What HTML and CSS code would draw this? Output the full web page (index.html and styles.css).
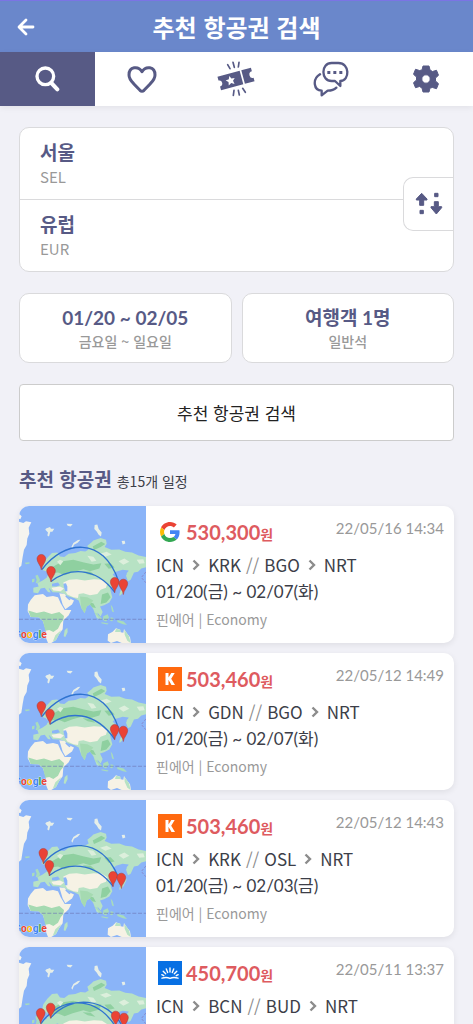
FILE: index.html
```html
<!DOCTYPE html>
<html lang="ko">

<head>
  <meta charset="utf-8">
  <meta name="viewport" content="width=device-width, initial-scale=1">
  <title>추천 항공권 검색</title>
  <link rel="stylesheet" href="styles.css">
</head>

<body>
  <!-- Shared drawings -->
  <svg class="defs" aria-hidden="true">
    <symbol id="map" viewBox="27 17 381 410" preserveAspectRatio="none">
      <rect x="27" y="17" width="381" height="410" fill="#8ab4f8" />
      <!-- Greenland and arctic islands -->
      <path fill="#f5f4ef" d="M27 64L40 68L48 63L64 66L56 82L58 100L52 114L50 134L42 148L38 170L34 196L27 202z M27 40L35 48L31 57L27 55z" />
      <path fill="#e6eee8" d="M108 84L120 80L123 85L133 85L127 94L121 94L117 108L112 105L114 96L106 88z M170 70L188 71L182 78L173 76z M254 74L262 72L266 86L275 96L273 108L266 103L260 93L253 86z M335 122L344 121L346 129L338 132z M184 140L190 128L204 119L211 118L203 127L192 133L187 145z" />
      <path fill="#a8dcbc" d="M44 187L58 185L59 189L48 191z M76 226L83 223L90 238L88 246L77 248L80 238z M66 236L74 234L73 244L66 246z" />
      <!-- Eurasia -->
      <path fill="#b7e2c4" d="M95 208L100 188L112 172L126 158L142 156L150 168L163 170L176 160L196 158L212 152L226 153L236 147L232 136L244 126L250 120L272 113L288 118L290 130L284 140L304 148L328 147L346 154L366 156L386 165L408 170V200L394 204L384 214L372 216L362 238L354 242L348 226L356 210L338 208L318 214L308 222L320 236L312 256L300 262L303 276L307 290L298 306L282 314L270 318L278 334L272 348L262 336L268 356L260 352L250 326L240 312L230 318L224 338L214 322L206 300L192 292L176 288L166 282L150 276L128 275L122 268L116 262L122 276L114 274L104 262L92 264L84 278L70 276L70 262L86 258L82 248L98 240L110 232L114 222L108 212z" />
      <path fill="#8fd0a0" d="M126 200L158 182L190 178L222 186L250 192L274 188L268 204L240 212L220 206L188 215L164 224L144 216L126 218z M248 138L274 124L286 131L272 140L252 149z M283 190L302 188L314 201L296 205z M218 212L242 214L256 226L233 221z M276 282L294 276L302 290L289 306L272 310z M236 306L250 308L258 322L246 320z" />
      <path fill="#dcefdc" d="M232 166L250 169L259 181L245 184z M270 160L290 154L305 162L286 169z M326 182L343 174L358 184L340 193z M380 178L400 176L404 188L388 190z M150 178L160 182L151 194L141 184z" />
      <!-- Steppe, deserts, Arabia -->
      <path fill="#f6f2e5" d="M160 246L178 238L200 236L224 240L252 236L276 238L292 248L288 262L272 268L262 280L240 284L220 278L206 280L204 292L190 290L172 282L164 268z M148 278L164 280L176 292L192 300L186 312L166 326L158 312z M124 262L150 258L162 264L152 272L130 270z" />
      <path fill="#8ab4f8" d="M160 250L168 248L172 258L172 272L165 272L162 260z M126 250L144 246L150 254L138 258L126 257z M168 284L182 296L178 299L166 288z M112 214L122 206L126 212L120 224L112 226z" />
      <path fill="#a5dab1" d="M210 288L232 290L250 300L240 312L230 318L224 338L214 322z" />
      <!-- Africa -->
      <path fill="#f6f2e5" d="M62 298L74 284L99 280L110 289L129 286L144 290L152 308L164 328L184 328L176 344L160 360L158 386L146 402L138 418L124 427H114L108 412L107 386L99 362L86 350L62 349L53 332L54 312z" />
      <path fill="#a5dab1" d="M55 330L80 337L102 333L125 340L148 334L162 346L160 358L152 368L144 384L130 394L118 388L106 390L99 362L86 350L62 349z" />
      <path fill="#b7e2c4" d="M136 404L154 388L146 404L138 418L128 424z M164 389L172 381L173 394L166 409L161 407z M335 262L345 249L350 256L340 276L329 286L328 281z M350 218L355 213L357 232L353 236z" />
      <!-- South-east Asia and Australia -->
      <path fill="#a8dcbc" d="M252 335L260 338L277 355L272 358z M280 347L293 341L297 351L288 363L279 358z M275 365L296 369L292 372L274 368z M302 350L311 352L307 362L301 361z M322 358L341 363L351 373L339 371L322 364z M302 312L308 320L312 335L306 333z" />
      <path fill="#f6f2e5" d="M294 401L308 393L318 383L330 387L332 395L340 396L342 385L350 397L360 410L363 427H335L321 421L303 427L293 420z" />
      <path fill="#b7e2c4" d="M318 384L332 387L331 394L315 394z M343 387L357 407L362 427L352 420L344 402z" />
      <path d="M27 356H408" fill="none" stroke="#6f78b8" stroke-width="2" stroke-dasharray="12 5" />
      <path d="M408 214l-14 17 14 16" fill="none" stroke="#8878bb" stroke-width="2" stroke-dasharray="8 4" />
      <text class="map-brand" x="12" y="411"><tspan fill="#4285f4">G</tspan><tspan fill="#ea4335">o</tspan><tspan fill="#fbbc05">o</tspan><tspan fill="#4285f4">g</tspan><tspan fill="#34a853">l</tspan><tspan fill="#ea4335">e</tspan></text>
    </symbol>
    <symbol id="pin" viewBox="0 0 28 48" overflow="visible">
      <path d="M14 47C13 34 1 26 1 14a13 13 0 0 1 26 0C27 26 15 34 14 47z" fill="#ea4335" stroke="#a63a3a" stroke-width="1.5" />
    </symbol>
    <symbol id="chevron" viewBox="0 0 8 12">
      <path d="M1.500 1.500L6 6L1.500 10.500" fill="none" stroke="#8c8c8c" stroke-width="2.400" />
    </symbol>
    <symbol id="kayak" viewBox="0 0 24 24">
      <rect width="24" height="24" fill="#ff690f" />
      <path d="M7.500 6h3v4.600L13.300 6h3.400l-3.500 5.700L17 18h-3.500l-3-5.200V18h-3z" fill="#fff" />
    </symbol>
    <symbol id="google" viewBox="0 0 48 48">
      <path fill="#ea4335" d="M24 9.500c3.540 0 6.710 1.220 9.210 3.600l6.850-6.850C35.900 2.380 30.470 0 24 0 14.620 0 6.510 5.380 2.560 13.220l7.980 6.190C12.430 13.720 17.740 9.500 24 9.500z" />
      <path fill="#4285f4" d="M46.980 24.550c0-1.570-.15-3.090-.38-4.550H24v9.020h12.940c-.58 2.960-2.260 5.480-4.780 7.180l7.730 6c4.510-4.180 7.090-10.360 7.090-17.650z" />
      <path fill="#fbbc05" d="M10.530 28.590c-.48-1.450-.76-2.990-.76-4.590s.27-3.140.76-4.590l-7.980-6.190C.92 16.460 0 20.120 0 24c0 3.880.92 7.540 2.560 10.780l7.970-6.190z" />
      <path fill="#34a853" d="M24 48c6.480 0 11.930-2.130 15.890-5.810l-7.730-6c-2.150 1.450-4.920 2.300-8.160 2.300-6.260 0-11.570-4.220-13.470-9.910l-7.980 6.190C6.510 42.620 14.620 48 24 48z" />
    </symbol>
    <symbol id="sunrise" viewBox="0 0 24 24">
      <rect width="24" height="24" fill="#0770e3" />
      <g fill="none" stroke="#fff" stroke-width="1.400" stroke-linecap="round">
        <path d="M12 7v4M8.300 8l1.400 3.500M15.700 8l-1.400 3.500M5.200 10.300l2.500 2.500M18.800 10.300l-2.500 2.500M3.800 13.700l2 1M20.200 13.700l-2 1" />
        <path d="M4 17.200c3.500-1.200 5.500-1 8 .2 2.500-1.200 4.500-1.400 8-.2" />
      </g>
    </symbol>
  </svg>

  <header class="header">
    <button class="back" type="button" aria-label="뒤로">
      <svg width="18" height="18" viewBox="0 0 18 18">
        <path d="M9 2L2 9l7 7M2.500 9H16" fill="none" stroke="#fff" stroke-width="2.800" stroke-linecap="round" stroke-linejoin="round" />
      </svg>
    </button>
    <h1>추천 항공권 검색</h1>
  </header>

  <nav class="tabs">
    <a class="tab active" href="#search" aria-label="검색">
      <svg width="26" height="28" viewBox="0 0 78 84">
        <circle cx="34" cy="34" r="25" fill="none" stroke="currentColor" stroke-width="10" />
        <path d="M52 54L70 73" stroke="currentColor" stroke-width="12" stroke-linecap="round" />
      </svg>
    </a>
    <a class="tab" href="#likes" aria-label="찜">
      <svg width="30" height="28" viewBox="0 0 90 84">
        <path d="M45 20C34 2 6 4 6 30c0 12 7 19 14 26l19 20q6 6 12 0l19-20c7-7 14-14 14-26C84 4 56 2 45 20z" fill="none" stroke="currentColor" stroke-width="9" stroke-linejoin="round" />
      </svg>
    </a>
    <a class="tab" href="#tickets" aria-label="티켓">
      <svg width="38" height="36" viewBox="0 0 114 108">
        <g transform="rotate(-15 57 54)">
          <path d="M5 33H74v42H5V63a9 9 0 0 0 0-18z M79 33h30v11a10 10 0 0 0 0 20v11H79z" fill="currentColor" />
          <path d="M40 40l4 9 10 1-7 7 2 10-9-5-9 5 2-10-7-7 10-1z" fill="#fff" />
        </g>
        <path d="M32 11l7 12M48 4l4 15M66 4l-2 14M51 88l-2 15M64 88l3 14M77 82l8 12" stroke="currentColor" stroke-width="5" stroke-linecap="round" />
      </svg>
    </a>
    <a class="tab" href="#chat" aria-label="채팅">
      <svg width="36" height="36" viewBox="0 0 108 108">
        <g fill="none" stroke="currentColor" stroke-width="7" stroke-linecap="round" stroke-linejoin="round">
          <path d="M56 6h20c35 0 35 53 6 54v15L66 60H56C23 60 23 6 56 6z" />
          <path d="M21 40C-3 55 2 88 26 89v14l18-14c12 0 20-3 26-9" />
        </g>
        <path d="M43 30h9v9h-9z M61 30h9v9h-9z M79 30h9v9h-9z" fill="currentColor" />
      </svg>
    </a>
    <a class="tab" href="#settings" aria-label="설정">
      <svg width="26" height="28" viewBox="0 0 26 28">
        <path fill="currentColor" fill-rule="evenodd" d="M10 1h6l1 4 2.500 1.500 4-1.200 2 5-3 2.700v3l3 2.700-2 5-4-1.200L17 23l-1 4h-6l-1-4-2.500-1.500-4 1.200-2-5 3-2.700v-3l-3-2.700 2-5 4 1.200L9 5z M13 9.800a4.200 4.200 0 1 0 0 8.400 4.200 4.200 0 0 0 0-8.400z" stroke="currentColor" stroke-width="1" stroke-linejoin="round" />
      </svg>
    </a>
  </nav>

  <main class="page">
    <!-- Search form -->
    <form class="search">
      <div class="places">
        <button class="place" type="button"><strong>서울</strong><span>SEL</span></button>
        <button class="place" type="button"><strong>유럽</strong><span>EUR</span></button>
        <button class="swap" type="button" aria-label="출발지와 도착지 바꾸기">
          <svg width="28" height="24" viewBox="0 0 84 72">
            <g fill="currentColor" stroke="currentColor" stroke-width="3" stroke-linejoin="round">
              <path d="M20 4L36 21v3H26v16H14V24H4v-3z M15 55h10v10H15z M59 4h10v10H59z M58 29h12v15h10v3L64 66 48 47v-3h10z" />
            </g>
          </svg>
        </button>
      </div>
      <div class="options">
        <button class="option" type="button"><strong>01/20 ~ 02/05</strong><span>금요일 ~ 일요일</span></button>
        <button class="option" type="button"><strong>여행객 1명</strong><span>일반석</span></button>
      </div>
      <button class="submit" type="button">추천 항공권 검색</button>
    </form>

    <!-- Results -->
    <div class="list-title">
      <h2>추천 항공권</h2>
      <span>총15개 일정</span>
    </div>

    <ul class="list">
      <li class="card">
        <svg class="card-map" viewBox="27 17 381 410" preserveAspectRatio="none">
          <use href="#map" x="27" y="17" width="381" height="410" />
          <path class="arc" d="M96 207C160 120 280 105 326 243M123 243C175 203 255 195 314 275" />
          <use href="#pin" x="80" y="161" width="28" height="48" />
          <use href="#pin" x="109" y="197" width="28" height="48" />
          <use href="#pin" x="300" y="230" width="28" height="48" />
          <use href="#pin" x="326" y="235" width="28" height="48" />
        </svg>
        <div class="info">
          <div class="top">
            <svg class="logo small"><use href="#google" /></svg>
            <strong class="price">530,300<small>원</small></strong>
            <time class="stamp">22/05/16 14:34</time>
          </div>
          <div class="route">ICN<svg><use href="#chevron" /></svg>KRK<i>//</i>BGO<svg><use href="#chevron" /></svg>NRT</div>
          <div class="dates">01/20(금) ~ 02/07(화)</div>
          <div class="airline">핀에어 | Economy</div>
        </div>
      </li>

      <li class="card">
        <svg class="card-map" viewBox="27 17 381 410" preserveAspectRatio="none">
          <use href="#map" x="27" y="17" width="381" height="410" />
          <path class="arc" d="M96 207C160 120 280 105 326 243M120 230C175 190 255 190 314 275" />
          <use href="#pin" x="80" y="161" width="28" height="48" />
          <use href="#pin" x="106" y="184" width="28" height="48" />
          <use href="#pin" x="300" y="230" width="28" height="48" />
          <use href="#pin" x="326" y="235" width="28" height="48" />
        </svg>
        <div class="info">
          <div class="top">
            <svg class="logo"><use href="#kayak" /></svg>
            <strong class="price">503,460<small>원</small></strong>
            <time class="stamp">22/05/12 14:49</time>
          </div>
          <div class="route">ICN<svg><use href="#chevron" /></svg>GDN<i>//</i>BGO<svg><use href="#chevron" /></svg>NRT</div>
          <div class="dates">01/20(금) ~ 02/07(화)</div>
          <div class="airline">핀에어 | Economy</div>
        </div>
      </li>

      <li class="card">
        <svg class="card-map" viewBox="27 17 381 410" preserveAspectRatio="none">
          <use href="#map" x="27" y="17" width="381" height="410" />
          <path class="arc" d="M100 207C160 135 270 125 323 243M118 243C170 203 250 200 309 275" />
          <use href="#pin" x="86" y="161" width="28" height="48" />
          <use href="#pin" x="104" y="197" width="28" height="48" />
          <use href="#pin" x="295" y="230" width="28" height="48" />
          <use href="#pin" x="320" y="235" width="28" height="48" />
        </svg>
        <div class="info">
          <div class="top">
            <svg class="logo"><use href="#kayak" /></svg>
            <strong class="price">503,460<small>원</small></strong>
            <time class="stamp">22/05/12 14:43</time>
          </div>
          <div class="route">ICN<svg><use href="#chevron" /></svg>KRK<i>//</i>OSL<svg><use href="#chevron" /></svg>NRT</div>
          <div class="dates">01/20(금) ~ 02/03(금)</div>
          <div class="airline">핀에어 | Economy</div>
        </div>
      </li>

      <li class="card">
        <svg class="card-map" viewBox="27 17 381 410" preserveAspectRatio="none">
          <use href="#map" x="27" y="17" width="381" height="410" />
          <path class="arc" d="M93 246C150 165 255 160 316 254M122 229C180 160 290 165 340 258" />
          <use href="#pin" x="78" y="200" width="28" height="48" />
          <use href="#pin" x="108" y="184" width="28" height="48" />
          <use href="#pin" x="303" y="208" width="28" height="48" />
          <use href="#pin" x="328" y="214" width="28" height="48" />
        </svg>
        <div class="info">
          <div class="top">
            <svg class="logo"><use href="#sunrise" /></svg>
            <strong class="price">450,700<small>원</small></strong>
            <time class="stamp">22/05/11 13:37</time>
          </div>
          <div class="route">ICN<svg><use href="#chevron" /></svg>BCN<i>//</i>BUD<svg><use href="#chevron" /></svg>NRT</div>
        </div>
      </li>
    </ul>
  </main>
</body>

</html>
```
FILE: styles.css
```css
* {
  box-sizing: border-box;
}

body {
  margin: 0;
  background-color: #f1f1f7;
  color: #3c3e48;
  font-family: "Noto Sans CJK KR", sans-serif;
}

button {
  margin: 0;
  padding: 0;
  border: none;
  background: none;
  color: inherit;
  font-family: inherit;
  cursor: pointer;
}

svg {
  display: block;
}

.defs {
  display: none;
}

/* Header */
.header {
  display: grid;
  grid-template-columns: 52px 1fr 52px;
  align-items: center;
  height: 52px;
  border-top: 1px solid #7b74e4;
  background-color: #6a87cb;
  color: #fff;
}

.header h1 {
  margin: 0;
  font-size: 24px;
  line-height: 48px;
  text-align: center;
}

.back {
  display: flex;
  justify-content: center;
}

/* Tabs */
.tabs {
  display: grid;
  grid-template-columns: repeat(5, 1fr);
  height: 54px;
  background-color: #fff;
  box-shadow: 0 2px 6px rgba(0, 0, 0, 0.06);
}

.tab {
  display: flex;
  align-items: center;
  justify-content: center;
  color: #575a85;
}

.tab.active {
  background-color: #575a85;
  color: #fff;
}

.page {
  padding: 21px 19px;
}

/* Search form */
.search {
  display: flex;
  flex-direction: column;
  gap: 21px;
}

.places,
.option {
  border: 1px solid #dadadc;
  border-radius: 10px;
  background-color: #fff;
}

.places {
  position: relative;
}

.place {
  display: flex;
  flex-direction: column;
  justify-content: center;
  width: 100%;
  height: 71px;
  padding: 0 20px;
  text-align: left;
}

.place + .place {
  height: 72px;
  border-top: 1px solid #dadadc;
}

.place strong,
.option strong {
  color: #575a85;
  font-size: 20px;
  line-height: 26px;
}

.place strong {
  font-size: 19px;
}

.place span {
  color: #999;
  font-size: 15px;
  line-height: 24px;
}

/* sits over the line between the two places */
.swap {
  position: absolute;
  top: 49px;
  right: 0;
  display: flex;
  align-items: center;
  justify-content: center;
  width: 50px;
  height: 54px;
  border: 1px solid #dadadc;
  border-right: none;
  border-radius: 10px 0 0 10px;
  background-color: #fff;
  color: #575a85;
}

.options {
  display: grid;
  grid-template-columns: 1fr 1fr;
  gap: 10px;
}

.option {
  display: flex;
  flex-direction: column;
  align-items: center;
  justify-content: center;
  height: 70px;
}

.option strong {
  font-family: Lato, "Noto Sans CJK KR", sans-serif;
  font-size: 19px;
}

.option span {
  color: #999;
  font-size: 14px;
  font-weight: 500;
  line-height: 20px;
}

.submit {
  height: 57px;
  border: 1px solid #ccc;
  border-radius: 4px;
  background-color: #fff;
  color: #222;
  font-size: 17px;
}

/* Results */
.list-title {
  display: flex;
  align-items: baseline;
  gap: 5px;
  margin: 24px 0 11px;
  line-height: 28px;
}

.list-title h2 {
  margin: 0;
  color: #575a85;
  font-size: 19px;
}

.list-title span {
  font-size: 14px;
}

.list {
  display: flex;
  flex-direction: column;
  gap: 10px;
  margin: 0;
  padding: 0;
  list-style: none;
}

.card {
  display: flex;
  min-height: 137px;
  border-radius: 10px;
  background-color: #fff;
  box-shadow: 0 2px 6px rgba(0, 0, 0, 0.08);
  overflow: hidden;
}

.card-map {
  flex: none;
  width: 127px;
  height: 137px;
}

.map-brand {
  font-family: Roboto, sans-serif;
  font-size: 31px;
  font-weight: 700;
  stroke: #fff;
  stroke-width: 2px;
  paint-order: stroke;
}

.arc {
  fill: none;
  stroke: #2f73d0;
  stroke-width: 4;
}

.info {
  flex: 1;
  padding: 7px 10px;
}

.top {
  display: flex;
  align-items: center;
  height: 38px;
}

.logo {
  width: 24px;
  height: 24px;
  margin: 0 4px 0 2px;
}

.logo.small {
  padding: 2px;
}

.price {
  color: #de5b5f;
  font-family: Lato, "Noto Sans CJK KR", sans-serif;
  font-size: 20px;
}

.price small {
  font-size: 14px;
}

.stamp {
  align-self: flex-start;
  margin-left: auto;
  color: #999;
  font-family: Lato, sans-serif;
  font-size: 15px;
  line-height: 30px;
}

.route,
.dates {
  font-size: 17px;
  line-height: 27px;
}

.route {
  display: flex;
  align-items: center;
}

.route svg {
  width: 8px;
  height: 12px;
  margin: 0 8px;
}

.route i {
  margin: 0 5px;
  color: #8c8c8c;
  font-style: normal;
}

.dates {
  font-family: Lato, "Noto Sans CJK KR", sans-serif;
}

.airline {
  color: #999;
  font-size: 14px;
  line-height: 28px;
}
```
